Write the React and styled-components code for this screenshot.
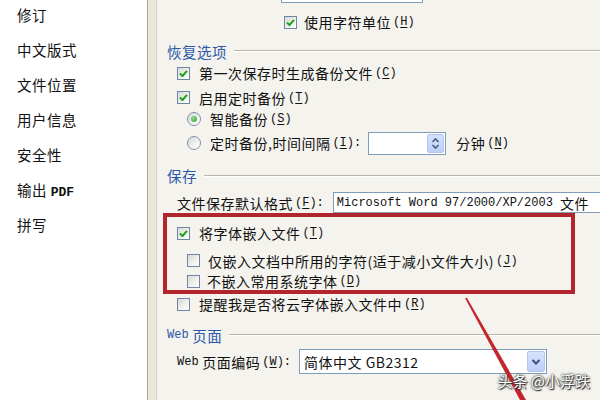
import React from 'react';
import styled, { createGlobalStyle } from 'styled-components';

const Global = createGlobalStyle`
  html, body { margin: 0; padding: 0; background: #f4f3ee; }
  body { font-family: "Noto Sans CJK SC", "Noto Sans", sans-serif; }
`;

const Window = styled.div`
  position: relative;
  width: 600px;
  height: 400px;
  display: flex;
  overflow: hidden;
  background: #f4f3ee;
  font-size: 14px;
  letter-spacing: 0.5px;
  color: #111;
`;

const Sidebar = styled.ul`
  list-style: none;
  margin: 0;
  padding: 0;
  width: 147px;
  flex: 0 0 147px;
  background: #fff;
  border-right: 1px solid #a9a696;
`;

const SideItem = styled.li`
  height: 35px;
  padding: 6px 0 0 17px;
  box-sizing: border-box;
  line-height: 18px;
  font-size: 14.5px;
`;

const Strip = styled.div`
  flex: 0 0 8px;
  background: #ebe8d9;
  border-right: 1px solid #d8d5c6;
`;

const Panel = styled.div`
  flex: 1;
  display: flex;
  flex-direction: column;
  overflow: hidden;
  min-width: 0;
`;

const CutBox = styled.div`
  margin-left: 124px;
  width: 140px;
  height: 2px;
  border: 1px solid #7f9db9;
  border-top: none;
  background: #fff;
  flex: 0 0 auto;
`;

const Row = styled.div`
  display: flex;
  align-items: center;
  flex: 0 0 ${p => p.$h}px;
  height: ${p => p.$h}px;
  padding-left: ${p => p.$indent || 0}px;
  white-space: nowrap;
`;

const Header = styled.div`
  display: flex;
  align-items: center;
  flex: 0 0 ${p => p.$h}px;
  height: ${p => p.$h}px;
  padding-top: ${p => p.$top || 0}px;
  box-sizing: border-box;
  padding-left: 10px;
  color: #2b58a8;
  font-size: 14.5px;
  white-space: nowrap;
`;

const Rule = styled.div`
  flex: 1;
  height: 0;
  margin-left: 7px;
  border-top: 1px solid #b9b6a8;
  border-bottom: 1px solid #fff;
`;

const Mono = styled.span`
  font-family: "Liberation Mono", "DejaVu Sans Mono", monospace;
  font-size: 12px;
  letter-spacing: 0;
`;

const Key = styled.span`
  font-family: "Liberation Mono", "DejaVu Sans Mono", monospace;
  font-size: 12px;
  letter-spacing: 0;
  margin-left: 2px;
  & u { text-underline-offset: 2px; }
`;

const Box = styled.span`
  flex: 0 0 13px;
  width: 13px;
  height: 13px;
  box-sizing: border-box;
  border: 1px solid #6f86a8;
  background: linear-gradient(135deg, #d9d9d2 0%, #f2f2ee 60%, #fff 100%);
  margin-right: ${p => p.$gap}px;
  display: flex;
  align-items: center;
  justify-content: center;
`;

const Round = styled(Box)`
  border-radius: 50%;
  flex-basis: 14px;
  width: 14px;
  height: 14px;
  border-color: #7d90ad;
`;

const Dot = styled.span`
  width: 6px;
  height: 6px;
  border-radius: 50%;
  background: radial-gradient(circle at 35% 35%, #8fdc8f, #2e9e2e);
`;

const Check = ({ checked, gap = 9 }) => (
  <Box $gap={gap}>
    {checked && (
      <svg width="9" height="9" viewBox="0 0 9 9">
        <path d="M1 4.5 L3.5 7 L8 1.8" fill="none" stroke="#21a121" strokeWidth="2" />
      </svg>
    )}
  </Box>
);

const Radio = ({ checked }) => (
  <Round $gap={9}>{checked && <Dot />}</Round>
);

const Field = styled.div`
  display: flex;
  align-items: stretch;
  box-sizing: border-box;
  border: 1px solid #7f9db9;
  background: #fff;
  width: ${p => p.$w}px;
  height: ${p => p.$h}px;
  flex: 0 0 auto;
  margin-left: ${p => p.$ml || 0}px;
  margin-right: ${p => p.$mr || 0}px;
`;

const FieldText = styled.span`
  flex: 1;
  display: flex;
  align-items: center;
  padding-left: ${p => p.$pl || 3}px;
  overflow: hidden;
  white-space: nowrap;
`;

const XpButton = styled.span`
  flex: 0 0 ${p => p.$w}px;
  margin: 1px;
  border: 1px solid #b3c6ef;
  border-radius: 2px;
  background: linear-gradient(180deg, #d6e2fc 0%, #bccffa 100%);
  display: flex;
  align-items: center;
  justify-content: center;
`;

const RedFrame = styled.div`
  flex: 0 0 auto;
  margin-left: 6px;
  width: 412px;
  box-sizing: border-box;
  border: 4px solid #b1262d;
  display: flex;
  flex-direction: column;
`;

const Arrow = styled.svg`
  position: absolute;
  left: 0;
  top: 0;
  pointer-events: none;
`;

const Watermark = styled.div`
  position: absolute;
  right: 10px;
  bottom: 9px;
  color: #fff;
  font-size: 15px;
  letter-spacing: 0;
  text-shadow: 0 0 2px #333, 0 0 3px #555, 1px 1px 1px #222;
`;

const k = (c) => (
  <Key>(<u>{c}</u>)</Key>
);

const sideItems = ['修订', '中文版式', '文件位置', '用户信息', '安全性', null, '拼写'];

const App = () => (
  <Window>
    <Global />
    <Sidebar>
      {sideItems.map((s, i) => (
        <SideItem key={i}>
          {s === null ? <>输出 <Mono style={{ fontSize: 13, fontWeight: 600 }}>PDF</Mono></> : s}
        </SideItem>
      ))}
    </Sidebar>
    <Strip />
    <Panel>
      <CutBox />
      <Row $h={38} $indent={127}>
        <Check checked gap={7} />使用字符单位{k('H')}
      </Row>

      <Header $h={20}>恢复选项<Rule /></Header>
      <Row $h={24} $indent={20}>
        <Check checked />第一次保存时生成备份文件{k('C')}
      </Row>
      <Row $h={25} $indent={20}>
        <Check checked />启用定时备份{k('T')}
      </Row>
      <Row $h={17} $indent={30}>
        <Radio checked />智能备份{k('S')}
      </Row>
      <Row $h={32} $indent={30}>
        <Radio />定时备份,时间间隔{k('I')}<Mono>:</Mono>
        <Field $w={78} $h={23} $ml={7} $mr={10}>
          <FieldText />
          <XpButton $w={15}>
            <svg width="9" height="13" viewBox="0 0 9 13">
              <path d="M1.5 5 L4.5 2 L7.5 5 M1.5 8 L4.5 11 L7.5 8" fill="none" stroke="#4a5e86" strokeWidth="1.6" />
            </svg>
          </XpButton>
        </Field>
        分钟{k('N')}
      </Row>

      <Header $h={33}>保存<Rule /></Header>
      <Row $h={21} $indent={20}>
        文件保存默认格式{k('F')}<Mono>:</Mono>
        <Field $w={300} $h={21} $ml={9}>
          <FieldText>
            <Mono>Microsoft Word 97/2000/XP/2003&nbsp;</Mono>文件
          </FieldText>
        </Field>
      </Row>

      <RedFrame>
        <Row $h={32} $indent={10}>
          <Check checked />将字体嵌入文件{k('T')}
        </Row>
        <Row $h={23} $indent={20}>
          <Check gap={8} />仅嵌入文档中所用的字符(适于减小文件大小){k('J')}
        </Row>
        <Row $h={18} $indent={20}>
          <Check gap={7} />不嵌入常用系统字体{k('D')}
        </Row>
      </RedFrame>
      <Row $h={20} $indent={20}>
        <Check />提醒我是否将云字体嵌入文件中{k('R')}
      </Row>

      <Header $h={35} $top={7}><Mono>Web</Mono>&nbsp;页面<Rule /></Header>
      <Row $h={25} $indent={20}>
        <Mono>Web</Mono>&nbsp;页面编码{k('W')}<Mono>:</Mono>
        <Field $w={248} $h={25} $ml={8}>
          <FieldText $pl={4}>简体中文 GB2312</FieldText>
          <XpButton $w={16}>
            <svg width="10" height="8" viewBox="0 0 10 8">
              <path d="M1.5 2 L5 5.5 L8.5 2" fill="none" stroke="#3e5586" strokeWidth="2.2" />
            </svg>
          </XpButton>
        </Field>
      </Row>
    </Panel>

    <Arrow width="600" height="400" viewBox="0 0 600 400">
      <polygon points="465,298 467,298 526,400 520,400" fill="#c3262d" />
    </Arrow>
    <Watermark>头条 @小浮跌</Watermark>
  </Window>
);

export default App;
